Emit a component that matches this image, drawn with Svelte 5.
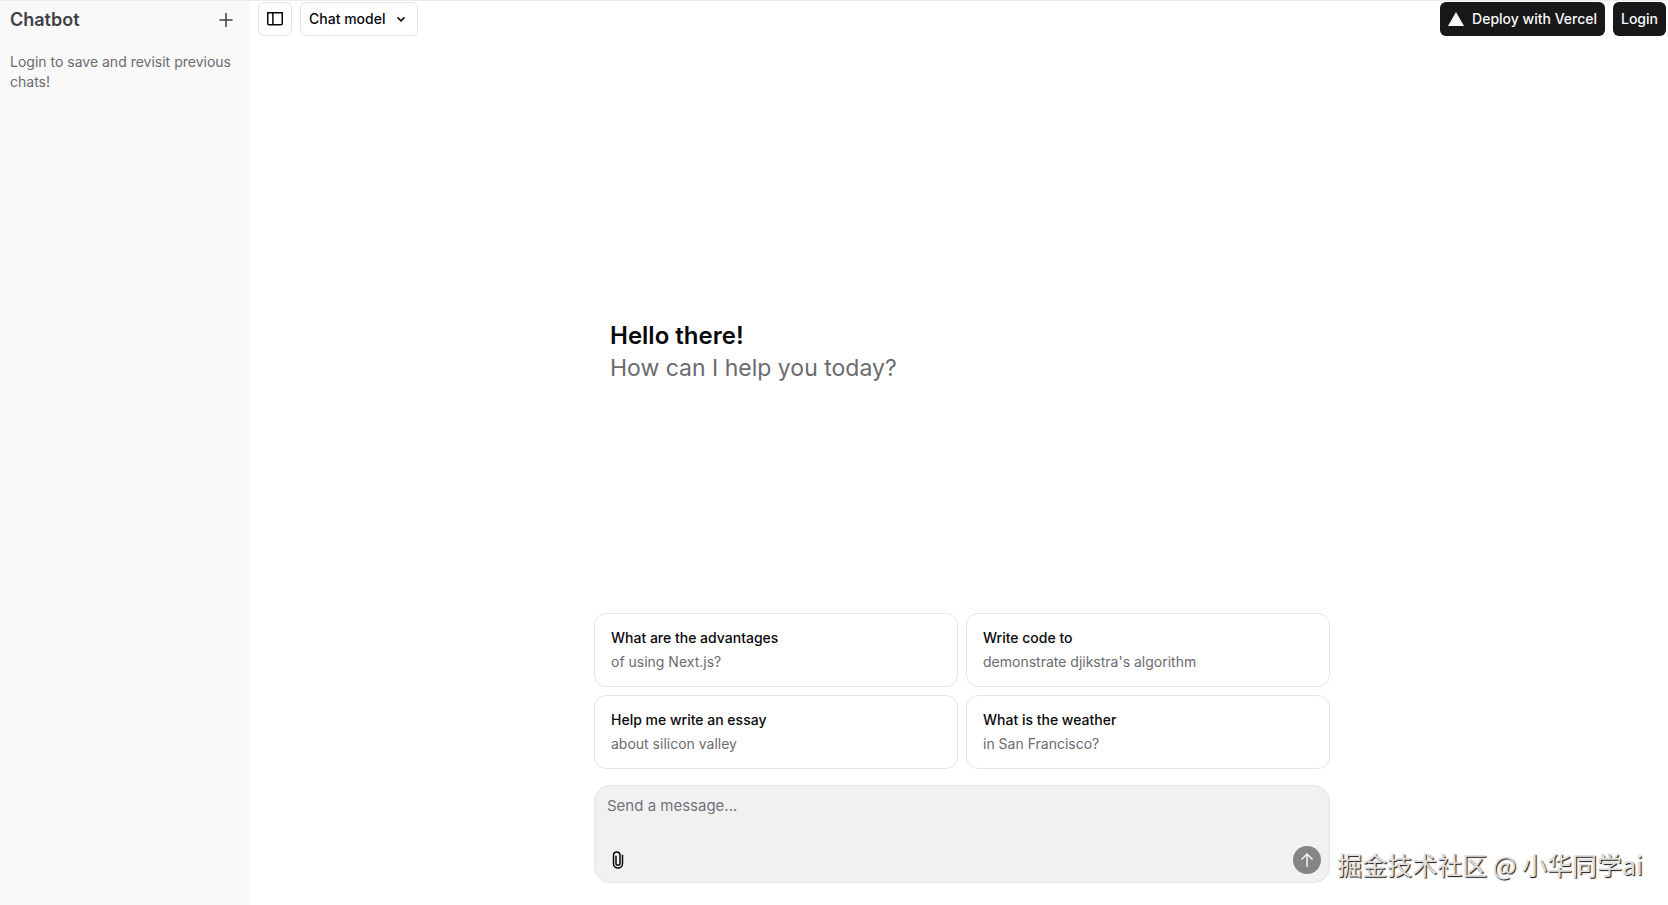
<script lang="ts">
  let message = $state('');
  let model = $state('Chat model');
  let sidebarOpen = $state(true);

  const suggestions = [
    { title: 'What are the advantages', label: 'of using Next.js?' },
    { title: 'Write code to', label: "demonstrate djikstra's algorithm" },
    { title: 'Help me write an essay', label: 'about silicon valley' },
    { title: 'What is the weather', label: 'in San Francisco?' },
  ];

  function toggleSidebar() {
    sidebarOpen = !sidebarOpen;
  }

  function pick(item) {
    message = `${item.title} ${item.label}`;
  }

  function newChat() {
    message = '';
  }

  function submit(event) {
    event.preventDefault();
    message = '';
  }
</script>

<div class="app">
  {#if sidebarOpen}
    <aside class="sidebar">
      <div class="sidebar-head">
        <a class="brand" href="/">Chatbot</a>
        <button class="new-chat" type="button" aria-label="New chat" onclick={newChat}>
          <svg width="16" height="16" viewBox="0 0 16 16" fill="currentColor">
            <path d="M8.75 1.75V1H7.25v.75V7.25H1.5v1.5h5.75v6.25h1.5V8.75h5.75v-1.5H8.75V1.75z" />
          </svg>
        </button>
      </div>
      <p class="history">Login to save and revisit previous chats!</p>
    </aside>
  {/if}

  <main>
    <header>
      <button class="outline toggle" type="button" aria-label="Toggle sidebar" onclick={toggleSidebar}>
        <svg width="16" height="16" viewBox="0 0 16 16" fill="none" stroke="currentColor" stroke-width="1.5">
          <path d="M.75 1.75h14.5v10.75a1.25 1.25 0 0 1-1.25 1.25H2A1.25 1.25 0 0 1 .75 12.5zM5.9 1.75v12" />
        </svg>
      </button>
      <div class="outline model">
        <select aria-label="Model" bind:value={model}>
          <option>Chat model</option>
          <option>Reasoning model</option>
        </select>
        <svg width="16" height="16" viewBox="0 0 16 16" fill="none" stroke="currentColor" stroke-width="1.5">
          <path d="M4.5 6.4 8 9.9l3.5-3.5" />
        </svg>
      </div>
      <a class="solid deploy" href="/deploy">
        <svg width="16" height="16" viewBox="0 0 16 16" fill="currentColor">
          <path d="M8 1l8 14H0z" />
        </svg>
        Deploy with Vercel
      </a>
      <a class="solid" href="/login">Login</a>
    </header>

    <div class="chat">
      <section class="greeting">
        <h1>Hello there!</h1>
        <p>How can I help you today?</p>
      </section>

      <div class="suggestions">
        {#each suggestions as item}
          <button type="button" onclick={() => pick(item)}>
            <strong>{item.title}</strong>
            <span>{item.label}</span>
          </button>
        {/each}
      </div>

      <form class="composer" onsubmit={submit}>
        <textarea rows="2" aria-label="Message" placeholder="Send a message..." bind:value={message}></textarea>
        <div class="tools">
          <button class="attach" type="button" aria-label="Attach file">
            <svg width="14" height="18" viewBox="0 0 14 18" fill="none" stroke="currentColor" stroke-width="1.5">
              <path d="M11.5 3.8v8.7a4.5 4.5 0 0 1-9 0V4.3a3.2 3.2 0 0 1 6.5 0v8a2 2 0 0 1-4 0V4.8" />
            </svg>
          </button>
          <button class="send" type="submit" aria-label="Send message">
            <svg width="14" height="16" viewBox="0 0 14 16" fill="none" stroke="currentColor" stroke-width="1.5">
              <path d="M7 15V2M1.5 7.5 7 2l5.5 5.5" />
            </svg>
          </button>
        </div>
      </form>
    </div>
  </main>

  <div class="watermark">掘金技术社区 @ 小华同学ai</div>
</div>

<style>
  :global(body) {
    margin: 0;
    background: #fff;
  }

  .app {
    display: flex;
    min-height: 100vh;
    box-sizing: border-box;
    border-top: 1px solid #ececee;
    position: relative;
    font-family: Inter, 'Noto Sans CJK SC', sans-serif;
    font-size: 14px;
    line-height: 20px;
    color: #09090b;
  }

  button, select, textarea {
    font: inherit;
    color: inherit;
    margin: 0;
  }

  button {
    cursor: pointer;
  }

  a {
    color: inherit;
    text-decoration: none;
  }

  svg {
    display: block;
    flex: none;
  }

  .sidebar {
    width: 250px;
    flex: none;
    box-sizing: border-box;
    padding: 2px 10px;
    background: #f9f9f9;
  }

  .sidebar-head {
    display: flex;
    align-items: center;
    justify-content: space-between;
    height: 34px;
    color: #3f3f46;
  }

  .brand {
    font-size: 18px;
    font-weight: 600;
  }

  .new-chat {
    display: flex;
    padding: 8px 6px;
    border: 0;
    background: none;
  }

  .history {
    margin: 15px 0 0;
    color: #6b6b70;
  }

  main {
    flex: 1;
    display: flex;
    flex-direction: column;
    min-width: 0;
  }

  header {
    display: flex;
    align-items: center;
    gap: 8px;
    padding: 1px 2px 1px 8px;
    font-weight: 500;
  }

  .outline, .solid {
    display: flex;
    align-items: center;
    justify-content: center;
    box-sizing: border-box;
    height: 34px;
    border-radius: 6px;
  }

  .outline {
    border: 1px solid #e4e4e7;
    background: #fff;
  }

  .toggle {
    width: 34px;
    padding: 0;
  }

  .model {
    position: relative;
    width: 118px;
  }

  .model select {
    width: 100%;
    height: 100%;
    padding: 0 28px 0 8px;
    border: 0;
    border-radius: 6px;
    background: none;
    appearance: none;
  }

  .model svg {
    position: absolute;
    right: 8px;
    pointer-events: none;
  }

  .solid {
    gap: 8px;
    padding: 0 8px;
    background: #18181b;
    color: #fafafa;
  }

  .deploy {
    margin-left: auto;
  }

  .chat {
    flex: 1;
    display: flex;
    flex-direction: column;
    width: 100%;
    max-width: 742px;
    box-sizing: border-box;
    margin: 0 auto;
    padding: 0 0 22px 6px;
  }

  .greeting {
    flex: 1;
    display: flex;
    flex-direction: column;
    justify-content: center;
    padding: 54px 16px 0;
    line-height: 32px;
  }

  .greeting h1 {
    margin: 0;
    font-size: 24px;
    font-weight: 600;
  }

  .greeting p {
    margin: 0;
    font-size: 23px;
    color: #6b6b70;
  }

  .suggestions {
    display: grid;
    grid-template-columns: 1fr 1fr;
    gap: 8px;
    margin-bottom: 16px;
  }

  .suggestions button {
    display: flex;
    flex-direction: column;
    gap: 4px;
    padding: 14px 16px;
    border: 1px solid #e4e4e7;
    border-radius: 12px;
    background: #fff;
    text-align: left;
  }

  .suggestions strong {
    font-weight: 500;
  }

  .suggestions span {
    color: #6b6b70;
  }

  .composer {
    border: 1px solid #e4e4e7;
    border-radius: 16px;
    background: #f1f1f2;
  }

  .composer textarea {
    display: block;
    width: 100%;
    box-sizing: border-box;
    padding: 8px 12px 0;
    border: 0;
    background: none;
    outline: none;
    resize: none;
    font-size: 15px;
    line-height: 24px;
  }

  .composer textarea::placeholder {
    color: #71717a;
    opacity: 1;
  }

  .tools {
    display: flex;
    align-items: center;
    justify-content: space-between;
    padding: 4px 8px 8px;
  }

  .attach {
    display: flex;
    padding: 5px 8px;
    border: 0;
    background: none;
  }

  .send {
    display: flex;
    align-items: center;
    justify-content: center;
    width: 28px;
    height: 28px;
    padding: 0;
    border: 0;
    border-radius: 50%;
    background: #858587;
    color: #f4f4f5;
  }

  .watermark {
    position: absolute;
    right: 25px;
    bottom: 23px;
    font-family: 'Noto Sans CJK SC', sans-serif;
    font-size: 25px;
    line-height: 36px;
    color: #dedede;
    text-shadow: 1px 1px 1px #111;
    white-space: nowrap;
  }
</style>
